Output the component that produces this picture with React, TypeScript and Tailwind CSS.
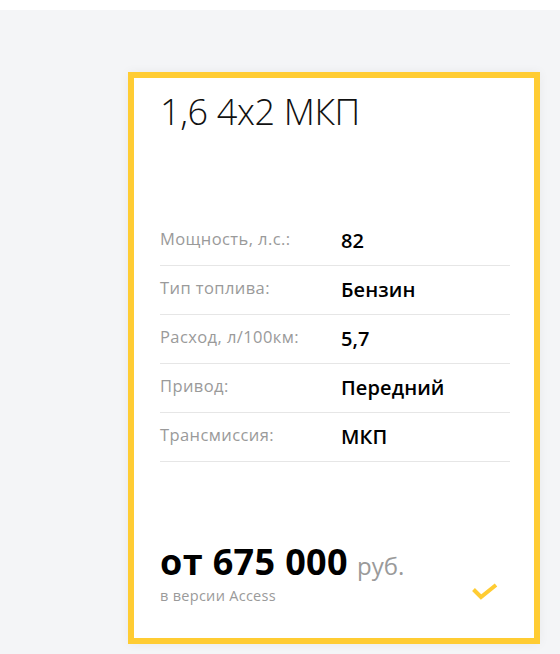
const specs = [
  { label: "Мощность, л.с.:", value: "82" },
  { label: "Тип топлива:", value: "Бензин" },
  { label: "Расход, л/100км:", value: "5,7" },
  { label: "Привод:", value: "Передний" },
  { label: "Трансмиссия:", value: "МКП" },
];

export default function App() {
  return (
    <div className="min-h-[654px] bg-white font-['Open_Sans',sans-serif]">
      <div className="mt-[10px] min-h-[644px] bg-[#f4f5f7] pl-[128px] pr-5 pt-[62px] pb-[10px]">
        <div className="h-[572px] border-[6px] border-[#ffcc33] bg-white pl-[26px] pr-[24px] pt-[12px] shadow-[0_0_10px_rgba(0,0,0,0.05)] flex flex-col">
          <h2 className="text-[36px] leading-[44px] font-light text-[#111] tracking-[-0.01em]">
            1,6 4x2 МКП
          </h2>

          <div className="mt-[83px]">
            {specs.map((s) => (
              <div
                key={s.label}
                className="flex items-center h-[49px] border-b border-[#e6e6e6]"
              >
                <span className="w-[181px] shrink-0 text-[16.5px] leading-6 tracking-[0.025em] text-[#9a9a9a] -mt-[4px]">
                  {s.label}
                </span>
                <span className="text-[20px] leading-6 font-semibold tracking-[0.005em] text-black">
                  {s.value}
                </span>
              </div>
            ))}
          </div>

          <div className="mt-auto mb-[32px] flex items-end justify-between">
            <div>
              <div className="flex items-baseline">
                <span className="text-[36px] leading-[40px] font-bold tracking-[0.01em] text-black">
                  от 675 000
                </span>
                <span className="ml-[9px] text-[24px] leading-[40px] text-[#9a9a9a]">
                  руб.
                </span>
              </div>
              <p className="text-[14.5px] leading-5 tracking-[0.02em] text-[#9a9a9a]">
                в версии Access
              </p>
            </div>
            <svg
              width="26"
              height="18"
              viewBox="0 0 26 18"
              className="mr-[12px] mb-[5px]"
              fill="none"
            >
              <path
                d="M1.5 6.5 L9 14 L24 2"
                stroke="#ffcc33"
                strokeWidth="4"
                strokeLinecap="butt"
                strokeLinejoin="miter"
              />
            </svg>
          </div>
        </div>
      </div>
    </div>
  );
}
